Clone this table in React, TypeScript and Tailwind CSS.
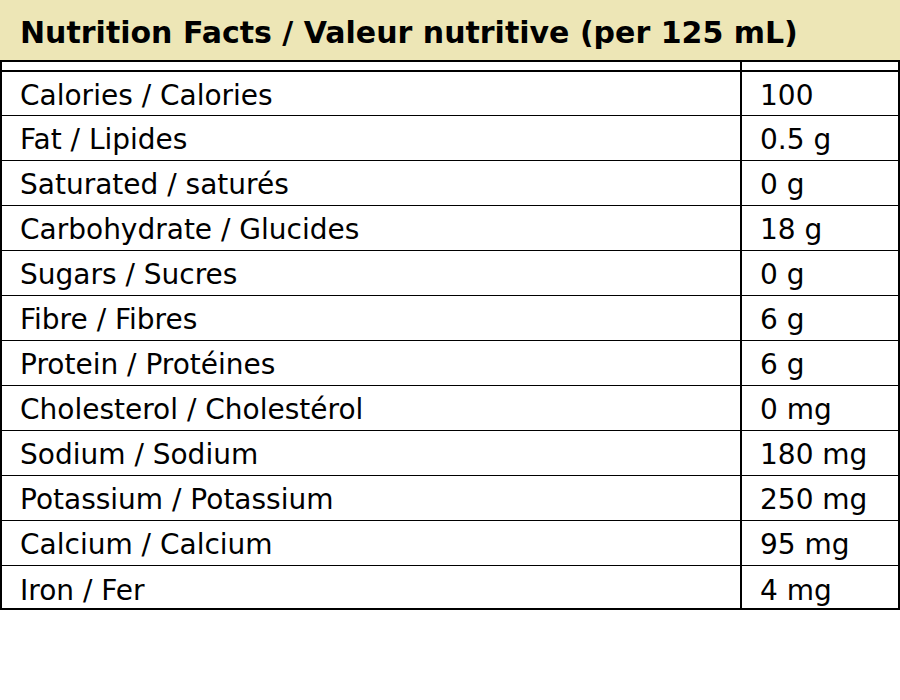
const rows: [string, string][] = [
  ["Calories / Calories", "100"],
  ["Fat / Lipides", "0.5 g"],
  ["Saturated / saturés", "0 g"],
  ["Carbohydrate / Glucides", "18 g"],
  ["Sugars / Sucres", "0 g"],
  ["Fibre / Fibres", "6 g"],
  ["Protein / Protéines", "6 g"],
  ["Cholesterol / Cholestérol", "0 mg"],
  ["Sodium / Sodium", "180 mg"],
  ["Potassium / Potassium", "250 mg"],
  ["Calcium / Calcium", "95 mg"],
  ["Iron / Fer", "4 mg"],
];

export default function App() {
  return (
    <div
      className="w-[900px] h-[700px] bg-white text-black"
      style={{ fontFamily: '"DejaVu Sans", sans-serif' }}
    >
      <div className="h-[60px] bg-[#ede6b6] flex items-center pl-5 pt-[6px]">
        <h1 className="text-[30px] font-bold leading-none">
          Nutrition Facts / Valeur nutritive (per 125 mL)
        </h1>
      </div>
      <div className="border-2 border-black h-[550px] flex flex-col">
        <div className="h-[8px] flex">
          <div className="w-[740px] border-r-2 border-black" />
          <div className="flex-1" />
        </div>
        {rows.map(([label, value], i) => {
          const last = i === rows.length - 1;
          return (
            <div
              key={label}
              className={
                i === 0
                  ? "h-[45px] flex border-t-2 border-black text-[28px]"
                  : last
                  ? "h-[43px] flex border-t border-black text-[28px]"
                  : "h-[45px] flex border-t border-black text-[28px]"
              }
            >
              <div
                className={
                  last
                    ? "w-[740px] border-r-2 border-black flex items-center pl-[18px] pt-[8px] leading-none"
                    : "w-[740px] border-r-2 border-black flex items-center pl-[18px] pt-1 leading-none"
                }
              >
                {label}
              </div>
              <div
                className={
                  last
                    ? "flex-1 flex items-center pl-[18px] pt-[8px] leading-none"
                    : "flex-1 flex items-center pl-[18px] pt-1 leading-none"
                }
              >
                {value}
              </div>
            </div>
          );
        })}
      </div>
    </div>
  );
}
